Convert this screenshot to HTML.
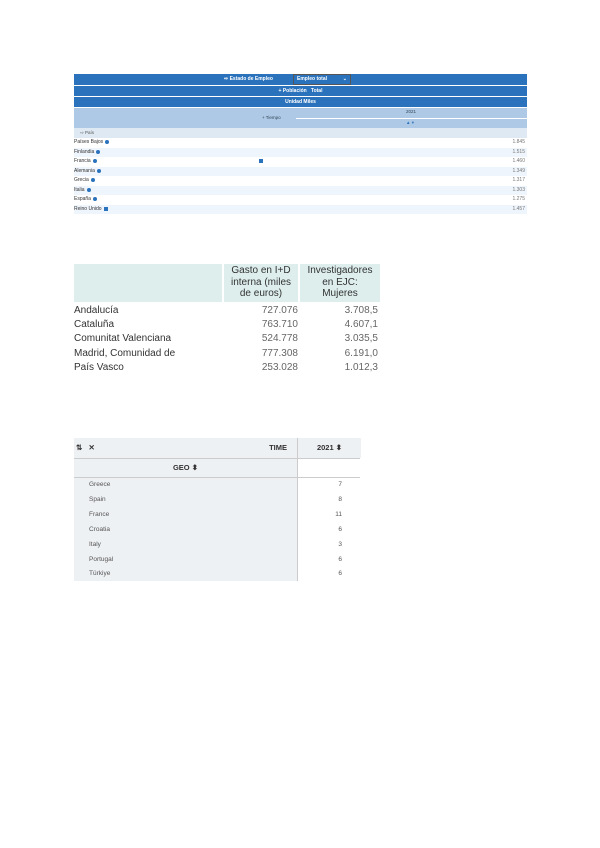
<!DOCTYPE html>
<html><head><meta charset="utf-8"><style>
body{margin:0;width:600px;height:848px;background:#fff;position:relative;font-family:"Liberation Sans",sans-serif;overflow:hidden}
.a{position:absolute}
.b{background:#2a72bc;color:#fff;font-size:5px;text-align:center;font-weight:bold}
.r{position:absolute;left:74px;width:453px;height:9px;font-size:5px;line-height:9px;color:#333}
.r span{position:absolute;right:2px;color:#777}
.r i{display:inline-block;width:4px;height:4px;background:#2a72bc;border-radius:2px;margin-left:2px;vertical-align:middle}
.t2{position:absolute;font-size:10px;color:#333;white-space:nowrap}
.g{position:absolute;left:74px;width:286px;height:14px;font-size:6.5px;line-height:14px;color:#555}
.g b{position:absolute;left:0;width:222px;height:14px;background:#eef1f4;font-weight:normal;padding-left:15px;box-sizing:border-box}
.g span{position:absolute;right:18px}
</style></head><body>
<div class="a b" style="left:74px;top:74px;width:453px;height:11px;line-height:11px"><span style="position:absolute;left:150px">⇨ Estado de Empleo</span><span style="position:absolute;left:219px;top:0;width:58px;height:9px;line-height:9px;text-align:left;border:1px solid #555;padding-left:3px;box-sizing:border-box;height:11px">Empleo total <span style="position:absolute;right:3px">⌄</span></span></div>
<div class="a b" style="left:74px;top:86px;width:453px;height:10px;line-height:10px">+ Población &nbsp; Total</div>
<div class="a b" style="left:74px;top:97px;width:453px;height:10px;line-height:10px">Unidad Miles</div>
<div class="a" style="left:74px;top:108px;width:453px;height:20px;background:#adc9e6;font-size:4.5px;color:#345">
<div class="a" style="left:188px;top:7px">+ Tiempo</div>
<div class="a" style="left:222px;top:10px;width:231px;height:1px;background:#fff"></div>
<div class="a" style="left:332px;top:1px">2021</div>
<div class="a" style="left:332px;top:12px;color:#2a72bc">▲ ▾</div></div>
<div class="a" style="left:74px;top:128px;width:453px;height:10px;background:#dfe9f3;font-size:4.5px;line-height:10px;color:#555;padding-left:6px;box-sizing:border-box">⇨ País</div>
<div class="r" style="top:138px;background:#fff">Países Bajos<i></i><span>1.845</span></div>
<div class="r" style="top:148px;background:#eef5fc">Finlandia<i></i><span>1.515</span></div>
<div class="r" style="top:157px;background:#fff">Francia<i></i><i style="position:absolute;left:183px;top:2px;border-radius:0"></i><span>1.460</span></div>
<div class="r" style="top:167px;background:#eef5fc">Alemania<i></i><span>1.349</span></div>
<div class="r" style="top:176px;background:#fff">Grecia<i></i><span>1.317</span></div>
<div class="r" style="top:186px;background:#eef5fc">Italia<i></i><span>1.303</span></div>
<div class="r" style="top:195px;background:#fff">España<i></i><span>1.275</span></div>
<div class="r" style="top:205px;background:#eef5fc">Reino Unido<i style="border-radius:0"></i><span>1.457</span></div>

<div class="a" style="left:74px;top:264px;width:306px;height:38px;background:#ddeeed"></div>
<div class="a" style="left:222px;top:264px;width:2px;height:38px;background:#fff"></div>
<div class="a" style="left:298px;top:264px;width:2px;height:38px;background:#fff"></div>
<div class="t2" style="left:224px;top:265px;width:74px;text-align:center;line-height:11.5px">Gasto en I+D<br>interna (miles<br>de euros)</div>
<div class="t2" style="left:302px;top:265px;width:76px;text-align:center;line-height:11.5px">Investigadores<br>en EJC:<br>Mujeres</div>
<div class="t2" style="left:74px;top:304px;line-height:14.2px">Andalucía<br>Cataluña<br>Comunitat Valenciana<br>Madrid, Comunidad de<br>País Vasco</div>
<div class="t2" style="left:224px;top:304px;width:74px;text-align:right;line-height:14.2px;color:#666">727.076<br>763.710<br>524.778<br>777.308<br>253.028</div>
<div class="t2" style="left:300px;top:304px;width:78px;text-align:right;line-height:14.2px;color:#666">3.708,5<br>4.607,1<br>3.035,5<br>6.191,0<br>1.012,3</div>

<div class="a" style="left:74px;top:438px;width:223px;height:20px;background:#eef1f4;font-size:7.5px;line-height:20px;color:#333"><b style="position:absolute;left:2px">⇅ &nbsp; ✕</b><b style="position:absolute;right:10px">TIME</b></div>
<div class="a" style="left:297px;top:438px;width:63px;height:20px;background:#eef1f4;border-left:1px solid #ccc;font-size:7.5px;line-height:20px;text-align:center;font-weight:bold;color:#333">2021 ⬍</div>
<div class="a" style="left:74px;top:458px;width:286px;height:1px;background:#ccc"></div>
<div class="a" style="left:74px;top:459px;width:223px;height:18px;background:#eef1f4;font-size:7.5px;line-height:18px;text-align:center;font-weight:bold;color:#333">GEO ⬍</div>
<div class="a" style="left:297px;top:459px;width:1px;height:122px;background:#ccc"></div>
<div class="a" style="left:74px;top:477px;width:286px;height:1px;background:#ccc"></div>
<div class="g" style="top:478px"><b>Greece</b><span>7</span></div>
<div class="g" style="top:493px"><b>Spain</b><span>8</span></div>
<div class="g" style="top:508px"><b>France</b><span>11</span></div>
<div class="g" style="top:523px"><b>Croatia</b><span>6</span></div>
<div class="g" style="top:538px"><b>Italy</b><span>3</span></div>
<div class="g" style="top:553px"><b>Portugal</b><span>6</span></div>
<div class="g" style="top:567px"><b>Türkiye</b><span>6</span></div>
<div class="a" style="left:74px;top:478px;width:223px;height:103px;background:#eef1f4;z-index:-1"></div>
</body></html>
